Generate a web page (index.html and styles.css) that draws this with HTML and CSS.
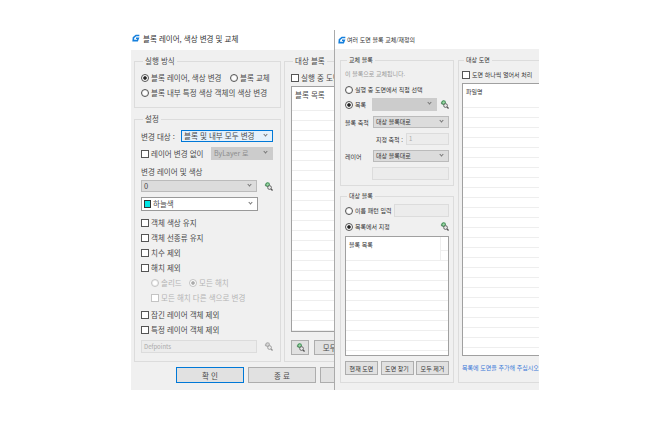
FILE: index.html
```html
<!DOCTYPE html>
<html lang="ko">
<head>
    <meta charset="UTF-8">
    <meta name="viewport" content="width=device-width, initial-scale=1.0">
    <title>블록 레이어, 색상 변경 및 교체</title>
    <link rel="stylesheet" href="styles.css">
</head>
<body>
<svg class="defs" width="0" height="0">
    <symbol id="pick" viewBox="0 0 12 12">
        <path d="M3.2 5.6 1.4 3.4" stroke="#777" stroke-width="1.4"/>
        <circle cx="4.8" cy="3.4" r="2.4" fill="#9fd8a8" stroke="#3f8f55" stroke-width="1.4"/>
        <path d="M9.4 9.4l2 2" stroke="#555" stroke-width="1.8"/>
        <circle cx="7.4" cy="7.4" r="2.5" fill="#e8e8e8" stroke="#666" stroke-width="1.3"/>
    </symbol>
    <symbol id="logo" viewBox="0 0 12 12">
        <path d="M11 2.2H6L2.2 5.4 1.8 10H8l1.4-3.6H6" fill="none" stroke="#1680dd" stroke-width="2.4"/>
    </symbol>
</svg>

<div class="window win-a">
    <div class="titlebar">
        <svg class="logo"><use href="#logo"/></svg>
        <span>블록 레이어, 색상 변경 및 교체</span>
    </div>
    <div class="client">
        <div class="columns">
            <div class="col-left">
                <fieldset class="group mode-group">
                    <legend>실행 방식</legend>
                    <div class="row">
                        <label class="opt first-mode"><i class="radio on"></i>블록 레이어, 색상 변경</label>
                        <label class="opt"><i class="radio"></i>블록 교체</label>
                    </div>
                    <label class="opt"><i class="radio"></i>블록 내부 특정 색상 객체의 색상 변경</label>
                </fieldset>
                <fieldset class="group set-group">
                    <legend>설정</legend>
                    <div class="row target-row">
                        <span class="target-key">변경 대상 :</span>
                        <div class="combo focus grow">블록 및 내부 모두 변경<b class="caret"></b></div>
                    </div>
                    <div class="row between bylayer-row">
                        <label class="opt"><i class="check"></i>레이어 변경 없이</label>
                        <div class="combo off bylayer">ByLayer 로<b class="caret"></b></div>
                    </div>
                    <div class="caption">변경 레이어 및 색상</div>
                    <div class="row icon-row">
                        <div class="combo gray grow">0<b class="caret"></b></div>
                        <svg class="pick"><use href="#pick"/></svg>
                    </div>
                    <div class="combo white color-combo"><i class="swatch"></i>하늘색<b class="caret"></b></div>
                    <div class="check-list">
                        <label class="opt"><i class="check"></i>객체 색상 유지</label>
                        <label class="opt"><i class="check"></i>객체 선종류 유지</label>
                        <label class="opt"><i class="check"></i>치수 제외</label>
                        <label class="opt"><i class="check"></i>해치 제외</label>
                    </div>
                    <div class="hatch-sub">
                        <div class="row">
                            <label class="opt dim solid-opt"><i class="radio"></i>솔리드</label>
                            <label class="opt dim"><i class="radio on"></i>모든 해치</label>
                        </div>
                        <label class="opt dim"><i class="check"></i>모든 해치 다른 색으로 변경</label>
                    </div>
                    <div class="check-list lock-list">
                        <label class="opt"><i class="check"></i>잠긴 레이어 객체 제외</label>
                        <label class="opt"><i class="check"></i>특정 레이어 객체 제외</label>
                    </div>
                    <div class="row icon-row layer-row">
                        <div class="field grow defpoints">Defpoints</div>
                        <svg class="pick dim-icon"><use href="#pick"/></svg>
                    </div>
                </fieldset>
            </div>
            <fieldset class="group target-group">
                <legend>대상 블록</legend>
                <label class="opt"><i class="check"></i>실행 중 도면에서 직접 선택</label>
                <div class="listbox target-list"><div class="line">블록 목록</div></div>
                <div class="row target-btns">
                    <button class="btn icon-btn"><svg class="pick"><use href="#pick"/></svg></button>
                    <button class="btn remove-btn">모두 제거</button>
                </div>
            </fieldset>
        </div>
        <div class="footer">
            <button class="btn wide default">확 인</button>
            <button class="btn wide">종 료</button>
            <button class="btn wide">도움말</button>
        </div>
    </div>
</div>

<div class="window win-b">
    <div class="titlebar small">
        <svg class="logo"><use href="#logo"/></svg>
        <span>여러 도면 블록 교체/재정의</span>
    </div>
    <div class="client">
        <div class="columns">
            <div class="col-left-b">
                <fieldset class="group swap-group">
                    <legend>교체 블록</legend>
                    <div class="hint">이 블록으로 교체됩니다.</div>
                    <label class="opt direct-opt"><i class="radio"></i>실행 중 도면에서 직접 선택</label>
                    <div class="row">
                        <label class="opt list-opt"><i class="radio on"></i>목록</label>
                        <div class="combo off grow tall">&nbsp;<b class="caret"></b></div>
                        <svg class="pick"><use href="#pick"/></svg>
                    </div>
                    <div class="row scale-combo">
                        <span class="key">블록 축척</span>
                        <div class="combo gray grow">대상 블록대로<b class="caret"></b></div>
                    </div>
                    <div class="row scale-row">
                        <span>지정 축척 :</span>
                        <div class="field scale-field">1</div>
                    </div>
                    <div class="row scale-row">
                        <span class="key">레이어</span>
                        <div class="combo gray grow">대상 블록대로<b class="caret"></b></div>
                    </div>
                    <div class="field layer-field"></div>
                </fieldset>
                <fieldset class="group pick-group">
                    <legend>대상 블록</legend>
                    <div class="row between pattern-row">
                        <label class="opt"><i class="radio"></i>이름 패턴 입력</label>
                        <div class="field pattern-field"></div>
                    </div>
                    <div class="row between from-list">
                        <label class="opt"><i class="radio on"></i>목록에서 지정</label>
                        <svg class="pick"><use href="#pick"/></svg>
                    </div>
                    <div class="listbox block-list"><div class="line">블록 목록</div></div>
                    <div class="row btn-row">
                        <button class="btn">현재 도면</button>
                        <button class="btn">도면 찾기</button>
                        <button class="btn">모두 제거</button>
                    </div>
                </fieldset>
            </div>
            <fieldset class="group drawing-group">
                <legend>대상 도면</legend>
                <label class="opt"><i class="check"></i>도면 하나씩 열어서 처리</label>
                <div class="listbox drawing-list"><div class="line">파일명</div></div>
                <div class="note">목록에 도면을 추가해 주십시오.</div>
            </fieldset>
        </div>
    </div>
</div>
</body>
</html>
```

FILE: styles.css
```css
* {
    box-sizing: border-box;
}
html, body {
    margin: 0;
    height: 100%;
    background: #fff;
    overflow: hidden;
}
body {
    position: relative;
    font-family: "Noto Sans CJK KR", "Noto Sans", sans-serif;
    font-size: 7.5px;
    color: #4a4a4a;
}
.defs {
    position: absolute;
}
.window {
    position: absolute;
    overflow: hidden;
}
.win-a {
    left: 131px;
    top: 26px;
    width: 204px;
    height: 364px;
}
.win-b {
    left: 334px;
    top: 30px;
    width: 205px;
    height: 360px;
    border-left: 1px solid #aaa;
    font-size: 6px;
    color: #333;
    z-index: 1;
}
.titlebar {
    height: 24px;
    padding-left: 1px;
    background: #fff;
    display: flex;
    align-items: center;
    gap: 3px;
    color: #333;
    white-space: nowrap;
}
.titlebar.small {
    height: 19px;
    padding-left: 3px;
    gap: 1px;
}
.logo {
    width: 8px;
    height: 8px;
    flex: none;
}
.client {
    background: #f0f0f0;
    height: 340px;
    padding: 6px 0 0 3px;
}
.win-b .client {
    height: 341px;
    padding-left: 5px;
}
.columns {
    display: flex;
    gap: 3px;
}
.win-b .columns {
    gap: 4px;
}
.col-left {
    width: 147px;
    flex: none;
}
.col-left-b {
    width: 114px;
    flex: none;
}
.group {
    margin: 0;
    padding: 0 7px 0 6px;
    border: 1px solid #dcdcdc;
    min-width: 0;
}
.group legend {
    padding: 0 2px;
    margin-left: 2px;
    line-height: 10px;
}
.row {
    display: flex;
    align-items: center;
}
.between {
    justify-content: space-between;
}
.grow {
    flex: 1;
    min-width: 0;
}
.opt {
    display: flex;
    align-items: center;
    gap: 2px;
    height: 15px;
    white-space: nowrap;
}
.check, .radio {
    flex: none;
    width: 8px;
    height: 8px;
    background: #fff;
    border: 1px solid #555;
}
.radio {
    border-radius: 50%;
    padding: 1px;
    background-clip: content-box;
}
.radio.on {
    background-color: #222;
    box-shadow: inset 0 0 0 1px #fff;
}
.dim {
    color: #b5b5b5;
}
.dim .check, .dim .radio {
    border-color: #c4c4c4;
}
.dim .radio.on {
    background-color: #aaa;
}
.combo {
    position: relative;
    height: 12px;
    line-height: 10px;
    padding-left: 2px;
    white-space: nowrap;
    border: 1px solid #bbb;
}
.combo.gray {
    background: #dcdcdc;
}
.combo.off {
    background: #ccc;
    color: #8c8c8c;
    border-color: #ccc;
}
.combo.white {
    background: #fff;
    border-color: #999;
}
.combo.focus {
    background: #e5f1fb;
    border-color: #0078d7;
}
.caret {
    position: absolute;
    right: 5px;
    top: 2px;
    width: 3px;
    height: 3px;
    border-right: 1px solid #777;
    border-bottom: 1px solid #777;
    transform: rotate(45deg);
}
.field {
    height: 13px;
    line-height: 11px;
    padding-left: 2px;
    background: #ececec;
    border: 1px solid #dcdcdc;
    color: #aaa;
}
.defpoints {
    font-size: 6px;
}
.pick {
    flex: none;
    width: 9px;
    height: 9px;
}
.dim-icon {
    opacity: .6;
    filter: grayscale(1);
}
.listbox {
    background-color: #fff;
    border: 1px solid #a0a0a0;
    background-image: repeating-linear-gradient(#fff 0 9px, #eee 9px 10px);
    background-position: 0 4px;
}
.line {
    height: 23px;
    padding: 3px 3px 0;
    line-height: 10px;
    background: #fff;
}

/* first window */
.mode-group {
    height: 52px;
    padding-top: 4px;
}
.first-mode {
    width: 89px;
}
.set-group {
    margin-top: 6px;
    height: 248px;
}
.target-row {
    margin-top: 6px;
}
.target-key {
    width: 40px;
    flex: none;
    white-space: nowrap;
}
.bylayer-row {
    margin-top: 5px;
    height: 13px;
}
.bylayer {
    width: 62px;
    height: 13px;
    font-size: 7px;
}
.caption {
    margin: 6px 0 3px;
    line-height: 11px;
}
.icon-row {
    gap: 7px;
}
.color-combo {
    display: flex;
    align-items: center;
    gap: 2px;
    width: 117px;
    height: 14px;
    margin-top: 5px;
    line-height: 12px;
}
.color-combo .caret {
    top: 3px;
}
.swatch {
    width: 7px;
    height: 8px;
    background: #00e5e5;
    border: 1px solid #333;
}
.check-list {
    margin-top: 4px;
}
.lock-list {
    margin-top: 2px;
}
.hatch-sub {
    padding-left: 10px;
}
.solid-opt {
    width: 38px;
}
.layer-row {
    margin-top: 3px;
}
.target-group {
    flex: none;
    width: 120px;
    height: 306px;
    padding-top: 4px;
}
.target-list {
    height: 246px;
    margin-top: 1px;
}
.target-btns {
    margin-top: 8px;
    gap: 5px;
}
.btn {
    font: inherit;
    color: inherit;
    height: 15px;
    padding: 0;
    background: #e1e1e1;
    border: 1px solid #adadad;
    white-space: nowrap;
}
.icon-btn {
    width: 18px;
    flex: none;
    display: flex;
    align-items: center;
    justify-content: center;
}
.remove-btn {
    width: 47px;
    flex: none;
}
.footer {
    display: flex;
    gap: 4px;
    padding: 5px 0 0 42px;
}
.wide {
    flex: none;
    width: 68px;
    height: 16px;
}
.default {
    border-color: #0078d7;
}

/* second window */
.win-b .group {
    padding: 0 4px;
}
.win-b .group legend {
    line-height: 10px;
}
.swap-group {
    height: 131px;
}
.hint {
    color: #999;
    height: 12px;
    line-height: 12px;
    margin-top: 3px;
}
.direct-opt {
    margin-top: 2px;
}
.list-opt {
    width: 27px;
    flex: none;
}
.swap-group .tall {
    height: 13px;
    margin-right: 3px;
}
.scale-combo {
    margin-top: 4px;
}
.scale-row {
    margin-top: 5px;
}
.scale-row:not(:has(.key)) {
    justify-content: flex-end;
    gap: 3px;
}
.key {
    width: 28px;
    flex: none;
    white-space: nowrap;
}
.scale-field {
    width: 43px;
    height: 12px;
    line-height: 10px;
}
.layer-field {
    width: 77px;
    margin: 5px 0 0 auto;
}
.pick-group {
    margin-top: 5px;
    height: 192px;
}
.pattern-row {
    margin-top: 3px;
    height: 13px;
}
.pattern-field {
    width: 55px;
}
.from-list {
    margin-top: 2px;
}
.block-list {
    height: 120px;
    margin-top: 2px;
}
.block-list .line {
    border-right: 1px solid #eee;
    width: 95px;
}
.btn-row {
    margin-top: 5px;
    justify-content: space-between;
}
.btn-row .btn {
    width: 33px;
    height: 14px;
}
.drawing-group {
    flex: none;
    width: 100px;
    height: 328px;
}
.win-b .drawing-group {
    padding: 2px 0 0 3px;
}
.drawing-list {
    height: 273px;
    margin-top: 1px;
}
.note {
    margin-top: 7px;
    line-height: 10px;
    color: #3a78d8;
    white-space: nowrap;
}
```
